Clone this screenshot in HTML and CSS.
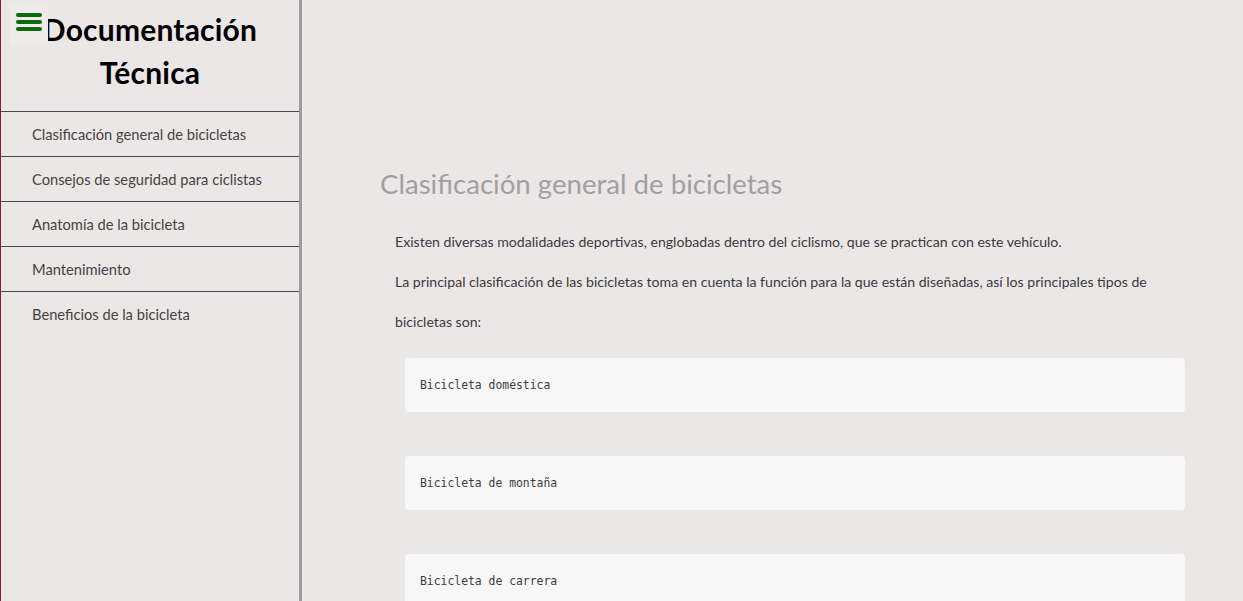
FILE: index.html
```html
<!DOCTYPE html>
<html lang="es">
<head>
<meta charset="utf-8">
<title>Documentación Técnica</title>
<link rel="stylesheet" href="styles.css">
</head>
<body>
<nav class="navbar">
  <header class="nav-header">
    <span class="menu-icon">
      <svg width="26" height="22" viewBox="0 0 26 22">
        <rect x="0" y="2" width="26" height="4" rx="2" fill="#0b6b0b"/>
        <rect x="0" y="9" width="26" height="4" rx="2" fill="#0b6b0b"/>
        <rect x="0" y="16" width="26" height="4" rx="2" fill="#0b6b0b"/>
      </svg>
    </span>
    <h1 class="title">Documentación Técnica</h1>
  </header>
  <ul class="nav-list">
    <li class="nav-item">Clasificación general de bicicletas</li>
    <li class="nav-item">Consejos de seguridad para ciclistas</li>
    <li class="nav-item">Anatomía de la bicicleta</li>
    <li class="nav-item">Mantenimiento</li>
    <li class="nav-item">Beneficios de la bicicleta</li>
  </ul>
</nav>
<main class="main">
  <section class="section">
    <h2 class="section-title">Clasificación general de bicicletas</h2>
    <p class="text">Existen diversas modalidades deportivas, englobadas dentro del ciclismo, que se practican con este vehículo.</p>
    <p class="text">La principal clasificación de las bicicletas toma en cuenta la función para la que están diseñadas, así los principales tipos de bicicletas son:</p>
    <div class="code">Bicicleta doméstica</div>
    <div class="code">Bicicleta de montaña</div>
    <div class="code">Bicicleta de carrera</div>
  </section>
</main>
</body>
</html>
```
FILE: styles.css
```css
html, body {
  margin: 0;
  padding: 0;
  height: 100%;
  overflow: hidden;
}
body {
  background: #ebe7e6;
  font-family: "Lato", "Open Sans", sans-serif;
  display: flex;
}
.navbar {
  width: 298px;
  flex: none;
  height: 601px;
  border-left: 1px solid #8b1a35;
  border-right: 3px solid #999d9c;
  background: #ebe7e6;
}
.nav-header {
  position: relative;
  height: 111px;
  border-bottom: 1px solid #4a4a4f;
}
.menu-icon {
  position: absolute;
  left: 9px;
  top: 5px;
  width: 38px;
  height: 40px;
  background: #eeebea;
  display: flex;
  justify-content: center;
  padding-top: 6px;
  box-sizing: border-box;
}
.title {
  margin: 0;
  padding: 8px 36px 0 36px;
  font-size: 30px;
  line-height: 43px;
  font-weight: 700;
  text-align: center;
  color: #000;
  letter-spacing: 0.2px;
}
.nav-list {
  list-style: none;
  margin: 0;
  padding: 0;
}
.nav-item {
  height: 44px;
  border-bottom: 1px solid #4a4a4f;
  padding-left: 31px;
  font-size: 14.7px;
  line-height: 44px;
  color: #444;
}
.nav-item:last-child {
  border-bottom: none;
}
.main {
  flex: 1;
  padding: 161px 58px 0 78px;
}
.section-title {
  margin: 0 0 15px 0;
  font-size: 27.6px;
  line-height: 46px;
  font-weight: 400;
  color: #a19fa4;
}
.text {
  margin: 0;
  padding-left: 15px;
  font-size: 14.1px;
  line-height: 40px;
  color: #3a3a40;
}
.code {
  margin: 16px 0 44px 25px;
  height: 54px;
  box-sizing: border-box;
  padding: 0 15px;
  background: #f7f7f7;
  border-radius: 4px;
  font-family: "DejaVu Sans Mono", monospace;
  font-size: 11.4px;
  line-height: 54px;
  color: #3c3c44;
}
.code + .code {
  margin-top: 0;
}
```
